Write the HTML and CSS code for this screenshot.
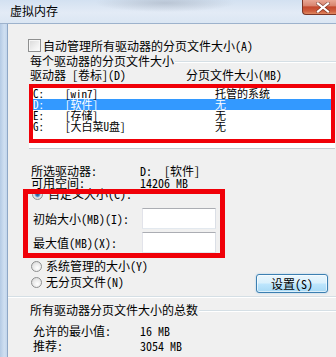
FILE: index.html
```html
<!DOCTYPE html>
<html lang="zh-CN">
<head>
<meta charset="utf-8">
<title>虚拟内存</title>
<link rel="stylesheet" href="styles.css">
</head>
<body>
<div class="win">
  <div class="titlebar">
    <span class="title">虚拟内存</span>
    <div class="close">
      <svg width="14" height="11" viewBox="0 0 14 11"><path d="M2 1.5 L12 9.5 M12 1.5 L2 9.5" stroke="#3a1008" stroke-width="3.6" stroke-linecap="square" opacity="0.45"/><path d="M2 1.5 L12 9.5 M12 1.5 L2 9.5" stroke="#ffffff" stroke-width="2.2" stroke-linecap="square"/></svg>
    </div>
  </div>
  <div class="main">
    <div class="frame"></div>
    <div class="content">
      <div class="check-row"><span class="checkbox"></span><span>自动管理所有驱动器的分页文件大小(A)</span></div>
      <div class="cap cap1"><span>每个驱动器的分页文件大小</span><span class="cap-line"></span></div>
      <div class="group1">
        <div class="list-head"><span>驱动器 [卷标](D)</span><span>分页文件大小(MB)</span></div>
        <div class="list-wrap">
          <div class="list">
            <div class="row"><span>C:</span><span>[win7]</span><span>托管的系统</span></div>
            <div class="row sel"><span>D:</span><span>[软件]</span><span>无</span></div>
            <div class="row"><span>E:</span><span>[存储]</span><span>无</span></div>
            <div class="row"><span>G:</span><span>[大白菜U盘]</span><span>无</span></div>
          </div>
          <div class="mark mark-list"></div>
        </div>
        <div class="info">
          <div class="info-row"><span>所选驱动器:</span><span class="pre">D:  [软件]</span></div>
          <div class="info-row"><span>可用空间:</span><span>14206 MB</span></div>
        </div>
        <div class="custom">
          <div class="radio-row"><span class="radio on"></span><span>自定义大小(C):</span></div>
          <div class="field-row first"><span>初始大小(MB)(I):</span><span class="input"></span></div>
          <div class="field-row"><span>最大值(MB)(X):</span><span class="input"></span></div>
          <div class="mark mark-custom"></div>
        </div>
        <div class="bottom-row">
          <div class="radios">
            <div class="radio-row r1"><span class="radio"></span><span>系统管理的大小(Y)</span></div>
            <div class="radio-row r2"><span class="radio"></span><span>无分页文件(N)</span></div>
          </div>
          <div class="button">设置(S)</div>
        </div>
      </div>
      <div class="cap cap2"><span>所有驱动器分页文件大小的总数</span><span class="cap-line"></span></div>
      <div class="totals">
        <div class="info-row t1"><span>允许的最小值:</span><span>16 MB</span></div>
        <div class="info-row t2"><span>推荐:</span><span>3054 MB</span></div>
      </div>
    </div>
  </div>
</div>
</body>
</html>
```

FILE: styles.css
```css
html, body {
  margin: 0;
  padding: 0;
}
body {
  width: 336px;
  height: 357px;
  overflow: hidden;
  background: #f0f0f0;
  font-family: "Noto Sans Mono CJK SC", "Noto Sans CJK SC", monospace;
  font-size: 12px;
  color: #000;
}
.win {
  display: flex;
  flex-direction: column;
  width: 336px;
  height: 357px;
}
.titlebar {
  display: flex;
  align-items: flex-start;
  height: 23px;
  border-bottom: 1px solid #9db2cc;
  background:
    radial-gradient(ellipse 70px 9px at 165px 3px, rgba(150, 160, 175, 0.45), rgba(150, 160, 175, 0) 100%),
    linear-gradient(180deg, #d3e1f1 0%, #e3ebf6 55%, #dbe6f3 100%);
}
.title {
  margin-left: 10px;
  margin-top: 3px;
  line-height: 16px;
  color: #000;
}
.close {
  margin-left: auto;
  width: 34px;
  height: 15px;
  box-sizing: border-box;
  border: 1px solid #7a3526;
  border-top: none;
  border-right: none;
  border-bottom-left-radius: 4px;
  background: linear-gradient(180deg, #e9a795 0%, #d98670 40%, #c4482d 50%, #cf5f3f 80%, #e08a62 100%);
  display: flex;
  align-items: center;
  justify-content: center;
  padding-left: 6px;
}
.main {
  flex: 1;
  display: flex;
  min-height: 0;
}
.frame {
  width: 7px;
  border-right: 1px solid #8ea7c6;
  background: linear-gradient(90deg, #b4cae4 0%, #cfdff1 60%, #c3d6ec 100%);
}
.content {
  flex: 1;
  background: #f0f0f0;
  padding-top: 15px;
  overflow: hidden;
}
.check-row {
  display: flex;
  align-items: center;
  height: 13px;
  line-height: 13px;
  margin-left: 20px;
  white-space: nowrap;
}
.checkbox {
  width: 13px;
  height: 13px;
  box-sizing: border-box;
  border: 1px solid #8e8f8f;
  background: linear-gradient(135deg, #d8d8d8 0%, #f0f0f0 60%, #fdfdfd 100%);
  box-shadow: inset 0 0 0 1px #f6f6f6;
  margin-right: 2px;
  flex: none;
}
.cap {
  display: flex;
  align-items: center;
  height: 12px;
  line-height: 12px;
  white-space: nowrap;
}
.cap1 {
  margin-top: 3px;
  margin-left: 22px;
}
.cap-line {
  flex: 1;
  height: 1px;
  margin-left: 1px;
  background: #d5dfe5;
  box-shadow: 0 1px 0 #ffffff;
}
.group1 {
  border-bottom: 1px solid #d5dfe5;
  box-shadow: 0 1px 0 #ffffff;
  padding-bottom: 3px;
}
.list-head {
  display: grid;
  grid-template-columns: 156px 1fr;
  margin-top: 2px;
  margin-left: 22px;
  height: 12px;
  line-height: 12px;
  white-space: nowrap;
}
.list-wrap {
  position: relative;
  margin-top: 3px;
  margin-left: 21px;
  width: 306px;
}
.list {
  background: #ffffff;
  padding-top: 4px;
  padding-bottom: 16px;
  border-bottom: 1px solid #c6cbd1;
}
.row {
  display: grid;
  grid-template-columns: 32px 150px 1fr;
  padding-left: 4px;
  height: 11px;
  line-height: 11px;
  font-size: 11px;
  white-space: nowrap;
}
.row.sel {
  background: #3399ff;
  color: #ffffff;
}
.mark {
  position: absolute;
  box-sizing: border-box;
  border-style: solid;
  border-color: #f00008;
  pointer-events: none;
}
.mark-list {
  left: 0;
  top: 0;
  width: 306px;
  height: 59px;
  border-width: 4px;
}
.info {
  margin-top: 16px;
  margin-left: 23px;
}
.info-row {
  display: grid;
  grid-template-columns: 109px 1fr;
  height: 12px;
  line-height: 12px;
  white-space: nowrap;
}
.pre {
  white-space: pre;
}
.custom {
  position: relative;
  margin-top: -1px;
  margin-left: 15px;
  width: 202px;
  padding-left: 9px;
  padding-bottom: 5px;
  box-sizing: border-box;
}
.radio-row {
  display: flex;
  align-items: center;
  height: 12px;
  line-height: 12px;
  white-space: nowrap;
}
.radio {
  width: 11px;
  height: 11px;
  box-sizing: border-box;
  border: 1px solid #8e8f8f;
  border-radius: 50%;
  background: radial-gradient(circle at 60% 65%, #ffffff 0%, #e8e8e8 55%, #cfcfcf 100%);
  margin-right: 4px;
  flex: none;
}
.radio.on {
  background: radial-gradient(circle, #2b5d8c 0%, #3d7ab5 28%, #9cc3e6 40%, #e6e6e6 55%, #d0d0d0 100%);
  margin-right: 5px;
}
.field-row {
  display: grid;
  grid-template-columns: 109px 74px;
  align-items: center;
  margin-top: 3px;
  padding-left: 1px;
  height: 21px;
  white-space: nowrap;
}
.field-row.first {
  margin-top: 8px;
}
.input {
  height: 21px;
  box-sizing: border-box;
  background: #ffffff;
  border: 1px solid;
  border-color: #abadb3 #dbdfe6 #e3e9ef #e2e3ea;
}
.mark-custom {
  left: 0;
  top: 1px;
  width: 202px;
  height: 69px;
  border-width: 5px;
}
.bottom-row {
  display: flex;
  justify-content: space-between;
  margin-left: 23px;
  margin-right: 8px;
}
.radio-row.r1 {
  margin-top: 2px;
}
.radio-row.r2 {
  margin-top: 4px;
}
.button {
  margin-top: 16px;
  width: 72px;
  height: 19px;
  box-sizing: border-box;
  border: 1px solid #3c7fb1;
  border-radius: 3px;
  background: linear-gradient(180deg, #eaf6fd 0%, #d9f0fc 48%, #bee6fd 52%, #a7d9f5 100%);
  box-shadow: inset 0 0 0 1px rgba(255, 255, 255, 0.6), 0 0 2px rgba(80, 170, 230, 0.5);
  text-align: center;
  line-height: 17px;
  white-space: nowrap;
}
.cap2 {
  margin-top: 7px;
  margin-left: 22px;
}
.totals {
  margin-left: 25px;
}
.totals .info-row {
  grid-template-columns: 107px 1fr;
  height: 12px;
  line-height: 12px;
}
.t1 {
  margin-top: 9px;
}
.t2 {
  margin-top: 3px;
}
```
